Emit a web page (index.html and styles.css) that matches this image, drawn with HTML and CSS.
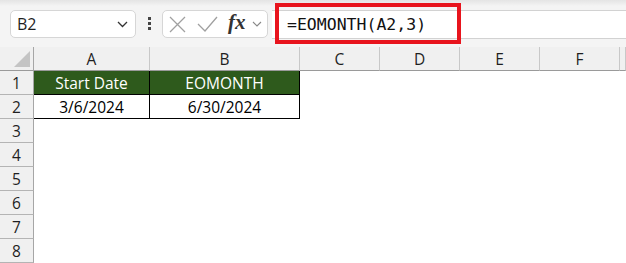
FILE: index.html
```html
<!DOCTYPE html>
<html lang="en">
<head>
  <meta charset="UTF-8">
  <title>EOMONTH</title>
  <link rel="stylesheet" href="styles.css">
</head>
<body>

  <div class="formula-bar">
    <div class="name-box">
      <span>B2</span>
      <svg class="chevron" width="11" height="7" viewBox="0 0 11 7"><path d="M1 1 L5.5 5.5 L10 1" fill="none" stroke="#333" stroke-width="1.3"/></svg>
    </div>
    <div class="grip"><i></i><i></i><i></i></div>
    <div class="fx-box">
      <svg width="17" height="17" viewBox="0 0 17 17"><path d="M1 1 L16 16 M16 1 L1 16" stroke="#a0a0a0" stroke-width="1.3"/></svg>
      <svg class="check" width="21" height="16" viewBox="0 0 21 16"><path d="M1 8 L8 15 L20 1" fill="none" stroke="#a0a0a0" stroke-width="1.3"/></svg>
      <span class="fx">fx</span>
      <svg class="chevron-small" width="10" height="6" viewBox="0 0 10 6"><path d="M1 1 L5 5 L9 1" fill="none" stroke="#888" stroke-width="1.1"/></svg>
    </div>
    <div class="formula-input">
      <span class="formula">=EOMONTH(A2,3)</span>
      <div class="highlight"></div>
    </div>
  </div>

  <div class="sheet">
    <div class="corner"><span class="triangle"></span></div>
    <div class="col-head">A</div>
    <div class="col-head">B</div>
    <div class="col-head">C</div>
    <div class="col-head">D</div>
    <div class="col-head">E</div>
    <div class="col-head">F</div>
    <div class="col-head"></div>

    <div class="row-head">1</div>
    <div class="cell table-head">Start Date</div>
    <div class="cell table-head">EOMONTH</div>
    <div class="cell"></div><div class="cell"></div><div class="cell"></div><div class="cell"></div><div class="cell"></div>

    <div class="row-head">2</div>
    <div class="cell table-cell">3/6/2024</div>
    <div class="cell table-cell">6/30/2024</div>
    <div class="cell"></div><div class="cell"></div><div class="cell"></div><div class="cell"></div><div class="cell"></div>

    <div class="row-head">3</div>
    <div class="cell"></div><div class="cell"></div><div class="cell"></div><div class="cell"></div><div class="cell"></div><div class="cell"></div><div class="cell"></div>
    <div class="row-head">4</div>
    <div class="cell"></div><div class="cell"></div><div class="cell"></div><div class="cell"></div><div class="cell"></div><div class="cell"></div><div class="cell"></div>
    <div class="row-head">5</div>
    <div class="cell"></div><div class="cell"></div><div class="cell"></div><div class="cell"></div><div class="cell"></div><div class="cell"></div><div class="cell"></div>
    <div class="row-head">6</div>
    <div class="cell"></div><div class="cell"></div><div class="cell"></div><div class="cell"></div><div class="cell"></div><div class="cell"></div><div class="cell"></div>
    <div class="row-head">7</div>
    <div class="cell"></div><div class="cell"></div><div class="cell"></div><div class="cell"></div><div class="cell"></div><div class="cell"></div><div class="cell"></div>
    <div class="row-head">8</div>
    <div class="cell"></div><div class="cell"></div><div class="cell"></div><div class="cell"></div><div class="cell"></div><div class="cell"></div><div class="cell"></div>
  </div>

</body>
</html>
```

FILE: styles.css
```css
body {
  margin: 0;
  background-color: #fff;
  font-family: 'Open Sans', 'Noto Sans', sans-serif;
  color: #1f1f1f;
  overflow: hidden;
}

.formula-bar {
  display: flex;
  align-items: flex-start;
  height: 47px;
  box-sizing: border-box;
  padding-top: 10px;
  background: linear-gradient(#e4e4e4 0, #f4f4f4 6px, #f4f4f4 100%);
}

.name-box {
  margin-left: 10px;
  width: 126px;
  height: 28px;
  box-sizing: border-box;
  border: 1px solid #d6d6d6;
  border-radius: 5px;
  background-color: #fff;
  display: flex;
  align-items: center;
  justify-content: space-between;
  padding: 0 7px 0 6px;
  font-size: 16px;
}

.grip {
  margin-left: 12px;
  margin-top: 7px;
  display: flex;
  flex-direction: column;
  gap: 2px;
}

.grip i {
  display: block;
  width: 3px;
  height: 3px;
  background-color: #444;
}

.fx-box {
  margin-left: 11px;
  width: 106px;
  height: 28px;
  box-sizing: border-box;
  border: 1px solid #d6d6d6;
  border-radius: 5px;
  background-color: #fff;
  display: flex;
  align-items: center;
  padding-left: 6px;
}

.fx-box .check {
  margin-left: 11px;
}

.fx {
  margin-left: 10px;
  font-family: 'Liberation Serif', serif;
  font-style: italic;
  font-weight: bold;
  font-size: 21px;
  color: #333;
  line-height: 1;
  margin-top: -3px;
}

.chevron-small {
  margin-left: 6px;
}

.formula-input {
  position: relative;
  flex: 1;
  margin-left: 4px;
  height: 29px;
  box-sizing: border-box;
  border-top: 1px solid #d2d2d2;
  border-bottom: 1px solid #d2d2d2;
  background-color: #fff;
  display: flex;
  align-items: center;
  padding-left: 15px;
}

.formula {
  font-family: 'DejaVu Sans Mono', monospace;
  font-size: 16.5px;
  color: #111;
}

.highlight {
  position: absolute;
  left: 3px;
  top: -8px;
  width: 186px;
  height: 41px;
  box-sizing: border-box;
  border: 4px solid #e8141d;
}

.sheet {
  display: grid;
  grid-template-columns: 34px 116px 150px 80px 80px 80px 80px 1fr;
  grid-auto-rows: 24px;
  font-size: 15.5px;
}

.corner,
.col-head,
.row-head {
  background-color: #f0f0f0;
  box-sizing: border-box;
  display: flex;
  align-items: center;
  justify-content: center;
  color: #1f1f1f;
}

.corner {
  position: relative;
  border-right: 1px solid #a6a6a6;
  border-bottom: 1px solid #9a9a9a;
}

.triangle {
  position: absolute;
  right: 3px;
  bottom: 3px;
  width: 16px;
  height: 16px;
  background-color: #c4c4c4;
  clip-path: polygon(100% 0, 100% 100%, 0 100%);
}

.col-head {
  border-right: 1px solid #c8c8c8;
  border-bottom: 1px solid #9a9a9a;
}

.row-head {
  border-right: 1px solid #a6a6a6;
  border-bottom: 1px solid #b4b4b4;
}

.cell {
  box-sizing: border-box;
  display: flex;
  align-items: center;
  justify-content: center;
  background-color: #fff;
}

.table-head {
  background-color: #2e5a1c;
  color: #fff;
  border-right: 1px solid #000;
  border-bottom: 1px solid #000;
}

.table-cell {
  color: #000;
  border-right: 1px solid #000;
  border-bottom: 1px solid #000;
}
```
